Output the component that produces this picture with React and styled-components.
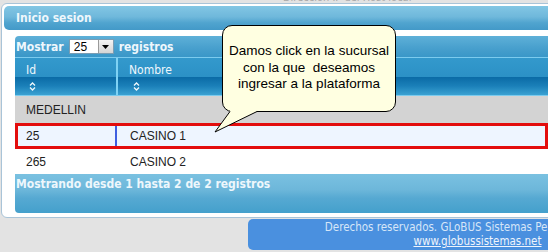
import styled, { createGlobalStyle } from "styled-components";

const GlobalStyle = createGlobalStyle`
    html, body {
        margin: 0;
        padding: 0;
        background: #e3e3e3;
        overflow: hidden;
    }
    body {
        font-family: "DejaVu Sans Condensed", "Liberation Sans", sans-serif;
    }
`

const Page = styled.div`
    position: relative;
    width: 548px;
    height: 252px;
    overflow: hidden;
`

const TopStrip = styled.div`
    height: 3px;
    overflow: hidden;
    padding-left: 283px;
    font-size: 11px;
    line-height: 11px;
    color: #a9a9a9;

    span {
        display: block;
        margin-top: -8px;
    }
`

const Card = styled.div`
    margin-left: 1px;
    width: 640px;
    background: #fff;
    border: 1px solid #a9c4d8;
    border-radius: 6px;
    padding: 2px 2px 4px;
`

const TitleBar = styled.div`
    height: 24px;
    display: flex;
    align-items: center;
    padding-left: 12px;
    border-radius: 5px 0 0 5px;
    background: linear-gradient(to bottom, #82c6e4 0%, #6fb8db 45%, #50a4cf 70%, #4399c8 100%);
    color: #eef7fc;
    font-weight: bold;
    font-size: 12px;
`

const Body = styled.div`
    padding: 6px 0 0 11px;
`

const Grid = styled.div`
    width: 533px;
    font-family: "Liberation Sans", Arial, sans-serif;
    font-size: 12px;
    color: #222;
`

const Toolbar = styled.div`
    height: 21px;
    display: flex;
    align-items: center;
    padding-left: 1px;
    border-radius: 4px 0 0 0;
    border-bottom: 1px solid #7ccbee;
    background: linear-gradient(to bottom, #5eb0d8 0%, #479fcd 60%, #3a97c8 100%);
    color: #eef7fc;
    font-family: "DejaVu Sans Condensed", "Liberation Sans", sans-serif;
    font-weight: bold;
    font-size: 12px;
`

const Select = styled.div`
    margin: 0 5px 0 5px;
    width: 39px;
    height: 13px;
    display: flex;
    align-items: center;
    justify-content: space-between;
    background: #fff;
    border: 1px solid #7a9db3;
    color: #000;
    font-family: "Liberation Sans", Arial, sans-serif;
    font-weight: normal;
    font-size: 12px;
    padding-left: 4px;
`

const SelectButton = styled.div`
    width: 14px;
    height: 13px;
    display: flex;
    align-items: center;
    justify-content: center;
    background: linear-gradient(#f4f4f4, #d4d4d4);
    border-left: 1px solid #9a9a9a;
`

const HeadRow = styled.div`
    display: grid;
    grid-template-columns: 101px 1fr;
    height: 37px;
    background: linear-gradient(to bottom, #3399cc 0%, #2c91c6 50%, #0b6ba6 52%, #1a7fb8 75%, #3aa1d2 100%);
    border-bottom: 1px solid #7ccbee;
`

const HeadCell = styled.div`
    display: flex;
    flex-direction: column;
    padding: 5px 0 0 ${p => p.$pad}px;
    border-left: ${p => p.$divider ? "2px solid #7fd2f4" : "none"};
    color: #eef7fc;
    font-family: "DejaVu Sans Condensed", "Liberation Sans", sans-serif;
    font-size: 12px;

    svg {
        margin: 5px 0 0 ${p => p.$iconOff}px;
    }
`

const GroupRow = styled.div`
    height: 27px;
    display: flex;
    align-items: center;
    padding-left: 11px;
    background: #d3d3d3;
`

const Row = styled.div`
    display: grid;
    grid-template-columns: ${p => p.$selected ? 97 : 100}px 1fr;
    height: ${p => p.$h}px;
    background: ${p => p.$selected ? "#eef5ff" : "#fff"};
    box-shadow: ${p => p.$selected ? "inset 0 0 0 3px #e30d0d" : "none"};
    box-sizing: border-box;
    padding: ${p => p.$selected ? "3px 3px" : "0"};
`

const Cell = styled.div`
    display: flex;
    align-items: center;
    padding-left: ${p => p.$pad}px;
    border-left: ${p => p.$focus ? "2px solid #3f5fe0" : "none"};
`

const FooterBand = styled.div`
    height: 39px;
    padding: 2px 0 0 1px;
    box-sizing: border-box;
    border-radius: 0 0 0 4px;
    background: linear-gradient(to bottom, #7ac1e1 0%, #6db7da 40%, #56a9d2 62%, #44a0cc 100%);
    color: #eef7fc;
    font-family: "DejaVu Sans Condensed", "Liberation Sans", sans-serif;
    font-weight: bold;
    font-size: 12px;
    line-height: 16px;
`

const SiteFooter = styled.div`
    margin: 1px 0 0 248px;
    width: 459px;
    height: 31px;
    padding-top: 1px;
    box-sizing: border-box;
    border-radius: 5px 0 0 5px;
    background: #4a90df;
    text-align: center;
    color: #d6e6f8;
    font-size: 11.5px;
    line-height: 14px;

    a {
        color: #eef4fc;
        text-decoration: underline;
    }
`

const Bubble = styled.div`
    position: absolute;
    left: 222px;
    top: 25px;
    width: 174px;
    height: 87px;
    box-sizing: border-box;
    padding-top: 17px;
    border: 1px solid #000;
    border-radius: 10px;
    background: #ffffe1;
    text-align: center;
    white-space: pre;
    font-family: "Liberation Sans", Arial, sans-serif;
    font-size: 13.5px;
    line-height: 16.5px;
    color: #000;
`

const Tail = styled.svg`
    position: absolute;
    left: 213px;
    top: 108px;
`

function SortIcon() {
    return (
        <svg width="7" height="9" viewBox="0 0 7 9">
            <path d="M1 3.5 L3.5 1 L6 3.5 M1 5.5 L3.5 8 L6 5.5" fill="none" stroke="#eef7fc" strokeWidth="1.3" />
        </svg>
    )
}

export default function App() {
    return (
        <Page>
            <GlobalStyle />
            <TopStrip><span>Dirección IP del Host local</span></TopStrip>
            <Card>
                <TitleBar>Inicio sesion</TitleBar>
                <Body>
                    <Grid>
                        <Toolbar>
                            Mostrar
                            <Select>
                                25
                                <SelectButton>
                                    <svg width="7" height="4" viewBox="0 0 7 4"><path d="M0 0 H7 L3.5 4 Z" fill="#000" /></svg>
                                </SelectButton>
                            </Select>
                            registros
                        </Toolbar>
                        <HeadRow>
                            <HeadCell $pad={11} $iconOff={3}>Id<SortIcon /></HeadCell>
                            <HeadCell $pad={11} $iconOff={4} $divider>Nombre<SortIcon /></HeadCell>
                        </HeadRow>
                        <GroupRow>MEDELLIN</GroupRow>
                        <Row $h={26} $selected>
                            <Cell $pad={8}>25</Cell>
                            <Cell $pad={13} $focus>CASINO 1</Cell>
                        </Row>
                        <Row $h={25}>
                            <Cell $pad={11}>265</Cell>
                            <Cell $pad={15}>CASINO 2</Cell>
                        </Row>
                        <FooterBand>Mostrando desde 1 hasta 2 de 2 registros</FooterBand>
                    </Grid>
                </Body>
            </Card>
            <SiteFooter>
                Derechos reservados. GLoBUS Sistemas Pereira - Colombia<br />
                <a href="#">www.globussistemas.net</a>
            </SiteFooter>
            <Bubble>{"Damos click en la sucursal\ncon la que  deseamos\ningresar a la plataforma"}</Bubble>
            <Tail width="46" height="26" viewBox="0 0 46 26">
                <polygon points="17,0 44,0 44,3.5 2,24 17,3.5" fill="#ffffe1" />
                <polyline points="17,3.5 2,24 44,3.5" fill="none" stroke="#000" strokeWidth="1" />
            </Tail>
        </Page>
    )
}
